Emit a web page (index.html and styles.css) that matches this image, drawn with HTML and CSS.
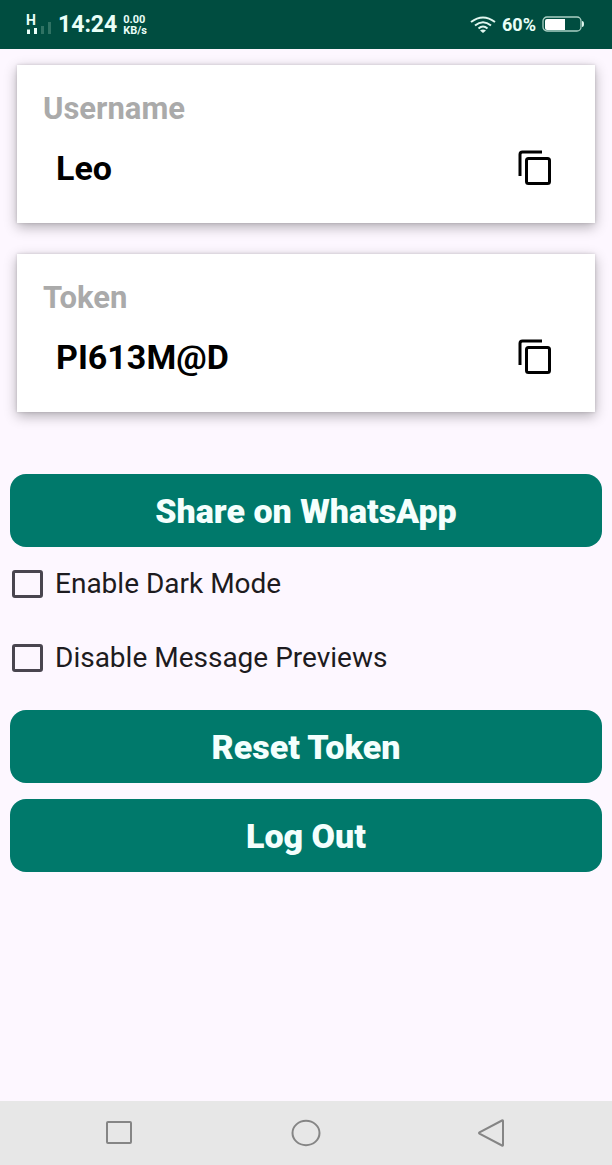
FILE: index.html
```
<!DOCTYPE html>
<html lang="en">
<head>
<meta charset="utf-8">
<meta name="viewport" content="width=device-width, initial-scale=1">
<title>Account settings</title>
<link rel="stylesheet" href="styles.css">
</head>
<body>
<header class="status">
  <div class="status-group">
    <svg class="signal" width="26" height="30" viewBox="0 0 26 30" aria-hidden="true">
      <text class="network" x="0" y="15">H</text>
      <path d="M1 19.500h3V24H1zM8 18h3v6H8z" fill="#e9fff8"/>
      <path d="M15 16h3v8h-3zM22 12h3v12h-3z" fill="#2f7263"/>
    </svg>
    <span class="clock">14:24</span>
    <span class="rate"><span>0.00</span><span>KB/s</span></span>
  </div>
  <div class="status-group">
    <svg width="26" height="18" viewBox="0 0 26 18" fill="none" stroke="#e0f7ef" stroke-width="2" aria-hidden="true">
      <path d="M1 6Q13-3 25 6M5 9.500Q13 3 21 9.500M8.500 12.500Q13 8.500 17.500 12.500"/>
      <path d="M10 14.500Q13 12.500 16 14.500L13 17z" fill="#e0f7ef" stroke="none"/>
    </svg>
    <span class="percent">60%</span>
    <svg width="43" height="17" viewBox="0 0 43 17" aria-hidden="true">
      <rect x="1" y="1" width="38" height="14" rx="4" fill="none" stroke="#a9cfc3" stroke-width="1.300"/>
      <path d="M5 3h18v11H5a2 2 0 0 1-2-2V5a2 2 0 0 1 2-2z" fill="#fff"/>
      <path d="M40 5q2 0 2 3t-2 3z" fill="#e0f7ef"/>
    </svg>
  </div>
</header>
<main class="content">
  <section class="card">
    <h2 class="card-title">Username</h2>
    <div class="card-row">
      <span class="value">Leo</span>
      <button class="copy" type="button" aria-label="Copy username">
        <svg width="34" height="36" viewBox="0 0 34 36" fill="none" stroke="#000" stroke-width="3" aria-hidden="true"><path d="M2 26V4.500a2.500 2.500 0 0 1 2.500-2.500H24"/><rect x="8.500" y="8.500" width="23" height="25" rx="2"/></svg>
      </button>
    </div>
  </section>
  <section class="card">
    <h2 class="card-title">Token</h2>
    <div class="card-row">
      <span class="value">PI613M@D</span>
      <button class="copy" type="button" aria-label="Copy token">
        <svg width="34" height="36" viewBox="0 0 34 36" fill="none" stroke="#000" stroke-width="3" aria-hidden="true"><path d="M2 26V4.500a2.500 2.500 0 0 1 2.500-2.500H24"/><rect x="8.500" y="8.500" width="23" height="25" rx="2"/></svg>
      </button>
    </div>
  </section>
  <div class="actions">
    <button class="action" type="button">Share on WhatsApp</button>
    <div class="options">
      <label class="option"><input class="check" type="checkbox"><span>Enable Dark Mode</span></label>
      <label class="option"><input class="check" type="checkbox"><span>Disable Message Previews</span></label>
    </div>
    <button class="action" type="button">Reset Token</button>
    <button class="action" type="button">Log Out</button>
  </div>
</main>
<nav class="navbar">
  <button class="nav-button" type="button" aria-label="Recent apps">
    <svg width="30" height="30" viewBox="0 0 30 30" aria-hidden="true"><rect x="3" y="4" width="24" height="21" rx="1"/></svg>
  </button>
  <button class="nav-button" type="button" aria-label="Home">
    <svg width="30" height="30" viewBox="0 0 30 30" aria-hidden="true"><ellipse cx="15" cy="15" rx="13.500" ry="12.200"/></svg>
  </button>
  <button class="nav-button" type="button" aria-label="Back">
    <svg width="30" height="30" viewBox="0 0 30 30" aria-hidden="true"><path d="M25 3v24q0 1-1 .5L1.500 15.700q-1-.7 0-1.400L24 2.500q1-.5 1 .5z"/></svg>
  </button>
</nav>
</body>
</html>
```
FILE: styles.css
```
* { box-sizing: border-box; }

body {
  margin: 0;
  min-height: 100vh;
  display: flex;
  flex-direction: column;
  background: #fdf7ff;
  color: #1d1b20;
  font-family: Roboto, "Liberation Sans", sans-serif;
}

button {
  border: 0;
  padding: 0;
  background: none;
  font-family: inherit;
  cursor: pointer;
}

svg { display: block; flex: none; }

.status {
  display: flex;
  justify-content: space-between;
  align-items: center;
  height: 49px;
  padding: 0 27px 0 26px;
  background: #004d40;
  color: #e9fff8;
  font-weight: 700;
}

.status-group { display: flex; align-items: center; gap: 6px; }
.network { fill: #e9fff8; font-size: 14px; font-weight: 700; }
.clock { font-size: 23px; line-height: 26px; }
.percent { font-size: 18px; line-height: 24px; }

.rate {
  display: flex;
  flex-direction: column;
  font-size: 11px;
  line-height: 11px;
}

.content { flex: 1; padding: 16px 0; }

.card {
  margin: 0 17px 31px;
  padding: 26px 43px 37px 26px;
  background: #fff;
  box-shadow: 0 4px 12px rgb(0 0 0 / 30%), 0 0 3px rgb(0 0 0 / 15%);
}

.card-title {
  margin: 0 0 23px;
  color: #aaa;
  font-size: 31px;
  line-height: 36px;
  font-weight: 700;
}

.card-row {
  display: flex;
  justify-content: space-between;
  align-items: center;
  height: 36px;
  padding-left: 13px;
}

.value {
  color: #000;
  font-size: 34px;
  line-height: 40px;
  font-weight: 700;
}

.actions {
  display: flex;
  flex-direction: column;
  gap: 16px;
  margin: 62px 10px 0;
}

.action {
  height: 73px;
  border-radius: 16px;
  background: #00796b;
  color: #f4fffd;
  font-size: 34px;
  line-height: 40px;
  font-weight: 900;
}

.options { margin: -16px 0 -1px; }

.option {
  display: flex;
  align-items: center;
  gap: 12px;
  width: fit-content;
  height: 74px;
  padding-left: 2px;
  font-size: 28px;
  line-height: 32px;
}

.check {
  appearance: none;
  width: 31px;
  height: 28px;
  margin: 0;
  border: 3px solid #49454f;
  border-radius: 3px;
}

.check:checked { background: #00796b; }

.navbar {
  display: grid;
  grid-template-columns: repeat(3, 1fr);
  align-items: center;
  height: 64px;
  padding: 0 26px;
  background: #e7e7e7;
}

.nav-button { display: flex; justify-content: center; }
.nav-button svg { fill: none; stroke: #858585; stroke-width: 2; }
```
